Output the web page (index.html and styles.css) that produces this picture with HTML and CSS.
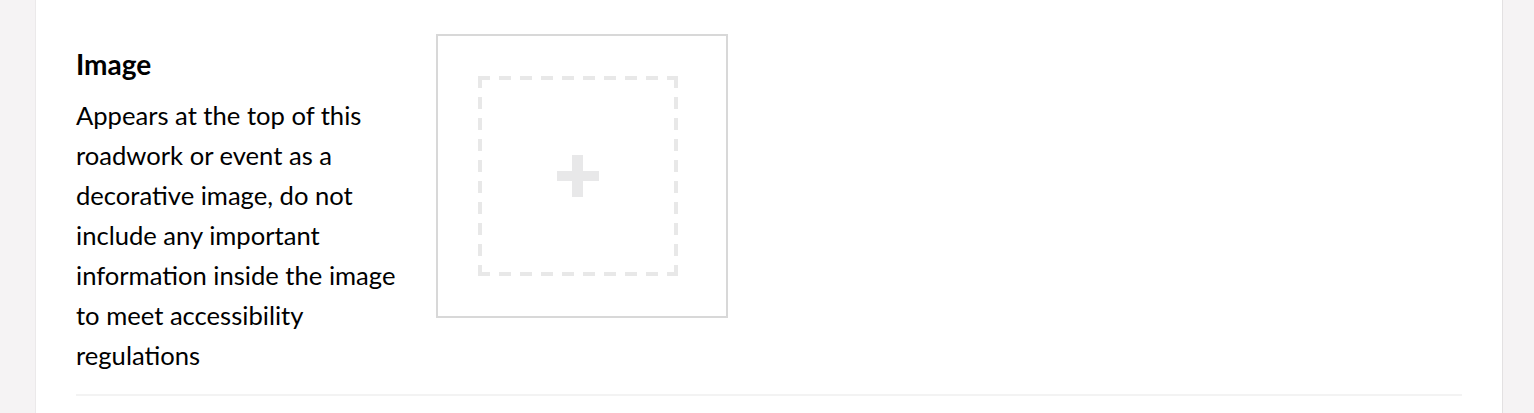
FILE: index.html
```html
<!DOCTYPE html>
<html lang="en">
<head>
<meta charset="utf-8">
<title>Image</title>
<link rel="stylesheet" href="styles.css">
</head>
<body>
<div class="page">
  <section class="card">
    <div class="field">
      <div class="field-text">
        <h2 class="field-title">Image</h2>
        <p class="field-desc">Appears at the top of this roadwork or event as a decorative image, do not include any important information inside the image to meet accessibility regulations</p>
      </div>
      <div class="upload">
        <div class="upload-drop">
          <span class="plus plus-h"></span>
          <span class="plus plus-v"></span>
        </div>
      </div>
    </div>
    <div class="divider"></div>
  </section>
</div>
</body>
</html>
```
FILE: styles.css
```css
html, body {
  margin: 0;
  padding: 0;
  height: 100%;
}
body {
  background: #f5f3f4;
  font-family: Lato, "Noto Sans", sans-serif;
  color: #000;
  overflow: hidden;
}
.page {
  padding: 0 31px 0 35px;
  height: 100%;
}
.card {
  background: #fff;
  border-left: 1px solid #ebe9ea;
  border-right: 1px solid #e3e1e2;
  height: 100%;
  padding: 34px 40px 0 40px;
  box-sizing: border-box;
}
.field {
  display: flex;
  gap: 40px;
  align-items: flex-start;
}
.field-text {
  width: 320px;
  flex: none;
}
.field-title {
  margin: 14px 0 0 0;
  font-size: 28px;
  line-height: 32px;
  font-weight: 700;
}
.field-desc {
  margin: 15px 0 0 0;
  font-size: 25.6px;
  line-height: 40px;
  font-weight: 400;
}
.upload {
  width: 292px;
  height: 284px;
  border: 2px solid #d8d8d8;
  box-sizing: border-box;
  padding: 40px 0 0 40px;
}
.upload-drop {
  position: relative;
  width: 200px;
  height: 200px;
  background:
    repeating-linear-gradient(90deg, #e8e8e8 0 12px, transparent 12px 21px) left top / 100% 4px no-repeat,
    repeating-linear-gradient(90deg, #e8e8e8 0 12px, transparent 12px 21px) left bottom / 100% 4px no-repeat,
    repeating-linear-gradient(180deg, #e8e8e8 0 12px, transparent 12px 21px) left top / 4px 100% no-repeat,
    repeating-linear-gradient(180deg, #e8e8e8 0 12px, transparent 12px 21px) right top / 4px 100% no-repeat;
}
.plus {
  position: absolute;
  background: #e8e8e9;
}
.plus-h {
  left: 79px;
  top: 95px;
  width: 42px;
  height: 10px;
}
.plus-v {
  left: 94px;
  top: 79px;
  width: 11px;
  height: 42px;
}
.divider {
  margin-top: 19px;
  height: 2px;
  background: #f3f3f3;
}
```
